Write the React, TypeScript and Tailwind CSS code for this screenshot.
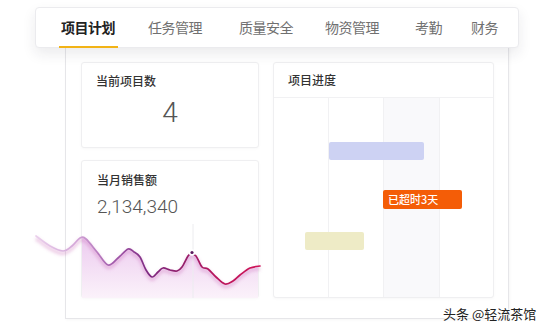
import React from "react";

type P = [number, number];

function smooth(pts: P[]): string {
  let d = `M${pts[0][0]},${pts[0][1]}`;
  for (let i = 0; i < pts.length - 1; i++) {
    const p0 = pts[i - 1] || pts[i];
    const p1 = pts[i];
    const p2 = pts[i + 1];
    const p3 = pts[i + 2] || p2;
    const c1x = p1[0] + (p2[0] - p0[0]) / 6;
    const c1y = p1[1] + (p2[1] - p0[1]) / 6;
    const c2x = p2[0] - (p3[0] - p1[0]) / 6;
    const c2y = p2[1] - (p3[1] - p1[1]) / 6;
    d += ` C${c1x.toFixed(2)},${c1y.toFixed(2)} ${c2x.toFixed(2)},${c2y.toFixed(2)} ${p2[0]},${p2[1]}`;
  }
  return d;
}

const pts: P[] = [
  [36, 236], [50, 246], [63, 251], [72, 246], [80, 238], [86, 239], [97, 252],
  [108, 265], [118, 258], [128, 249], [134, 252], [140, 257], [146, 270],
  [152, 277], [158, 272], [163, 268], [170, 270], [177, 271], [182, 267],
  [188, 256], [191, 254], [196, 256], [202, 267], [208, 269], [216, 277],
  [225, 284], [233, 281], [240, 275], [250, 268], [260, 266],
];

const line = smooth(pts);
const area = `${line} L260,298 L36,298 Z`;

const tabs = [
  { label: "项目计划", ml: "ml-[25px]", active: true },
  { label: "任务管理", ml: "ml-[33px]" },
  { label: "质量安全", ml: "ml-[37px]" },
  { label: "物资管理", ml: "ml-[32px]" },
  { label: "考勤", ml: "ml-[36px]" },
  { label: "财务", ml: "ml-[29px]" },
];

export default function App() {
  return (
    <div
      className="relative w-[554px] h-[332px] bg-white overflow-hidden"
      style={{ fontFamily: '"Noto Sans CJK SC", "Noto Sans", sans-serif' }}
    >
      {/* outer panel */}
      <div className="pt-[40px] pl-[65px]">
        <div className="w-[444px] h-[279px] border border-[#e6e6e9] bg-white shadow-[1px_1px_3px_rgba(0,0,0,0.04)] pt-[21px] pl-[15px] flex gap-[14px]">
          <div className="w-[178px] flex flex-col gap-[12px]">
            <div className="h-[86px] rounded-[3px] border border-[#efeff1] bg-white shadow-[0_1px_3px_rgba(0,0,0,0.03)] flex flex-col">
              <div className="pt-[11px] pl-[14px] text-[12px] leading-[14px] font-medium text-[#333]">
                当前项目数
              </div>
              <div
                className="mt-[9px] text-center text-[28px] leading-[32px] font-light text-[#555]"
                style={{ fontFamily: 'Roboto, "Liberation Sans", sans-serif' }}
              >
                4
              </div>
            </div>
            <div className="h-[138px] rounded-[3px] border border-[#efeff1] bg-white shadow-[0_1px_3px_rgba(0,0,0,0.03)]">
              <div className="pt-[12px] pl-[15px] text-[12px] leading-[14px] font-medium text-[#333]">
                当月销售额
              </div>
              <div
                className="mt-[9px] pl-[15px] text-[19px] leading-[22px] font-light text-[#555]"
                style={{ fontFamily: 'Roboto, "Liberation Sans", sans-serif' }}
              >
                2,134,340
              </div>
            </div>
          </div>
          <div className="w-[221px] h-[236px] rounded-[3px] border border-[#efeff1] bg-white shadow-[0_1px_3px_rgba(0,0,0,0.03)] flex flex-col">
            <div className="h-[35px] border-b border-[#f1f1f3] flex items-center pl-[14px] text-[12px] font-medium text-[#333]">
              项目进度
            </div>
            <div className="relative flex-1 grid grid-cols-[55px_55px_56px_1fr]">
              <div className="border-r border-[#f1f1f3]" />
              <div className="border-r border-[#f1f1f3]" />
              <div className="border-r border-[#f1f1f3] bg-[#f9f9fb]" />
              <div />
              <div className="absolute left-[55px] top-[44px] w-[95px] h-[18px] rounded-[2px] bg-[#cdd2f3]" />
              <div className="absolute left-[109px] top-[92px] w-[79px] h-[19px] rounded-[2px] bg-[#f45d07] text-white text-[11px] leading-[19px] pl-[5px] font-medium">
                已超时3天
              </div>
              <div className="absolute left-[31px] top-[134px] w-[59px] h-[18px] rounded-[2px] bg-[#eeebc6]" />
            </div>
          </div>
        </div>
      </div>

      {/* sales wave chart */}
      <svg className="absolute left-0 top-0 pointer-events-none" width={554} height={332} viewBox="0 0 554 332">
        <defs>
          <linearGradient id="stroke" gradientUnits="userSpaceOnUse" x1="36" y1="0" x2="260" y2="0">
            <stop offset="0" stopColor="#ead0ec" />
            <stop offset="0.18" stopColor="#d3a6d8" />
            <stop offset="0.35" stopColor="#a25aab" />
            <stop offset="0.5" stopColor="#7e2a82" />
            <stop offset="0.66" stopColor="#951e6a" />
            <stop offset="0.8" stopColor="#b8155d" />
            <stop offset="1" stopColor="#cf1457" />
          </linearGradient>
          <linearGradient id="fill" gradientUnits="userSpaceOnUse" x1="0" y1="240" x2="0" y2="298">
            <stop offset="0" stopColor="#edcdf0" />
            <stop offset="1" stopColor="#fbf2fa" />
          </linearGradient>
          <clipPath id="card">
            <rect x="82" y="161" width="176" height="137" />
          </clipPath>
          <filter id="blur" x="-10%" y="-50%" width="120%" height="200%">
            <feGaussianBlur stdDeviation="1.6" />
          </filter>
        </defs>
        <path d={area} fill="url(#fill)" clipPath="url(#card)" />
        <line x1="193" y1="224" x2="193" y2="298" stroke="#ececef" strokeWidth="1" />
        <path
          d={line}
          fill="none"
          stroke="#c75cb0"
          strokeOpacity="0.28"
          strokeWidth="4"
          filter="url(#blur)"
          transform="translate(0,2.5)"
        />
        <path d={line} fill="none" stroke="url(#stroke)" strokeWidth="1.7" strokeLinecap="round" />
        <circle cx="192" cy="252.5" r="3.2" fill="#ffffff" />
        <circle cx="192" cy="252.5" r="1.6" fill="#5b1a5e" />
      </svg>

      {/* tab bar */}
      <div className="absolute left-[35px] top-[7px] w-[484px] h-[41px] rounded-[4px] border border-[#ebebee] bg-white shadow-[0_6px_14px_rgba(30,30,60,0.09)] z-10 flex items-stretch">
        {tabs.map((t) => (
          <div key={t.label} className={`relative flex items-center ${t.ml}`}>
            <span
              className={
                t.active
                  ? "text-[14px] font-bold text-[#222] tracking-[-0.5px]"
                  : "text-[14px] text-[#707070] tracking-[-0.5px]"
              }
            >
              {t.label}
            </span>
            {t.active && (
              <div className="absolute -left-[2px] -right-[3px] -bottom-[1px] h-[2px] bg-[#f2b316]" />
            )}
          </div>
        ))}
      </div>

      {/* watermark */}
      <div
        className="absolute left-[443px] top-[305px] text-[13px] leading-[17px] text-[#222] z-20"
        style={{ textShadow: "0 0 2px #fff, 0 0 2px #fff, 0 0 3px #fff" }}
      >
        头条 @轻流茶馆
      </div>
    </div>
  );
}
